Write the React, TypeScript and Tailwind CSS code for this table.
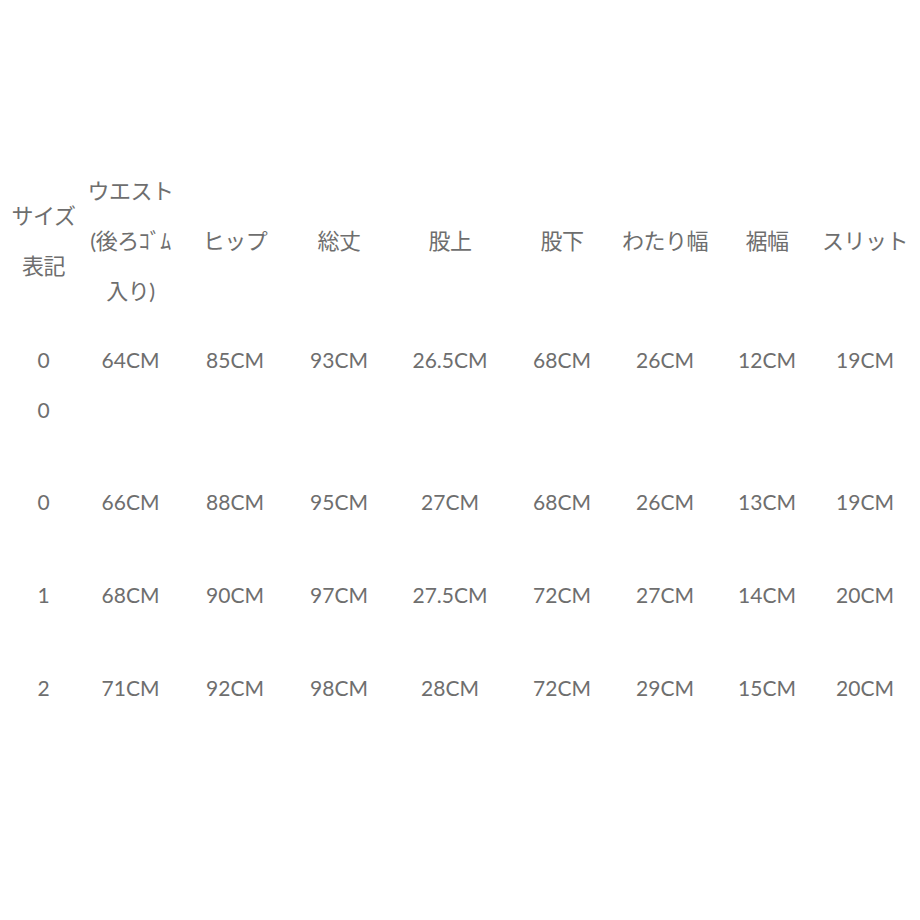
const cols = 'grid grid-cols-[87px_87px_122px_86px_136px_88px_118px_86px_110px]';

const rows: string[][] = [
  ['66CM', '88CM', '95CM', '27CM', '68CM', '26CM', '13CM', '19CM'],
  ['68CM', '90CM', '97CM', '27.5CM', '72CM', '27CM', '14CM', '20CM'],
  ['71CM', '92CM', '98CM', '28CM', '72CM', '29CM', '15CM', '20CM'],
];

const sizes = ['0', '1', '2'];

export default function App() {
  return (
    <div
      className="w-[920px] h-[920px] bg-white text-[#6e6e6e] text-[21px] leading-[50px] pt-[166px]"
      style={{ fontFamily: 'Lato, "Noto Sans CJK JP", sans-serif' }}
    >
      {/* Header */}
      <div className={`${cols} items-center text-center text-[22px] tracking-[-0.5px]`}>
        <div>
          サイズ
          <br />
          表記
        </div>
        <div className="whitespace-nowrap">
          ウエスト
          <br />
          (後ろｺﾞﾑ
          <br />
          入り)
        </div>
        <div>ヒップ</div>
        <div>総丈</div>
        <div>股上</div>
        <div>股下</div>
        <div>わたり幅</div>
        <div>裾幅</div>
        <div>スリット</div>
      </div>

      {/* First row: size cell wraps onto two lines */}
      <div className={`${cols} items-start text-center pt-[19px] pb-[20px]`}>
        <div>
          0
          <br />0
        </div>
        {['64CM', '85CM', '93CM', '26.5CM', '68CM', '26CM', '12CM', '19CM'].map((v, i) => (
          <div key={i}>{v}</div>
        ))}
      </div>

      {rows.map((r, ri) => (
        <div key={ri} className={`${cols} items-center text-center py-[21.5px]`}>
          <div>{sizes[ri]}</div>
          {r.map((v, i) => (
            <div key={i}>{v}</div>
          ))}
        </div>
      ))}
    </div>
  );
}
